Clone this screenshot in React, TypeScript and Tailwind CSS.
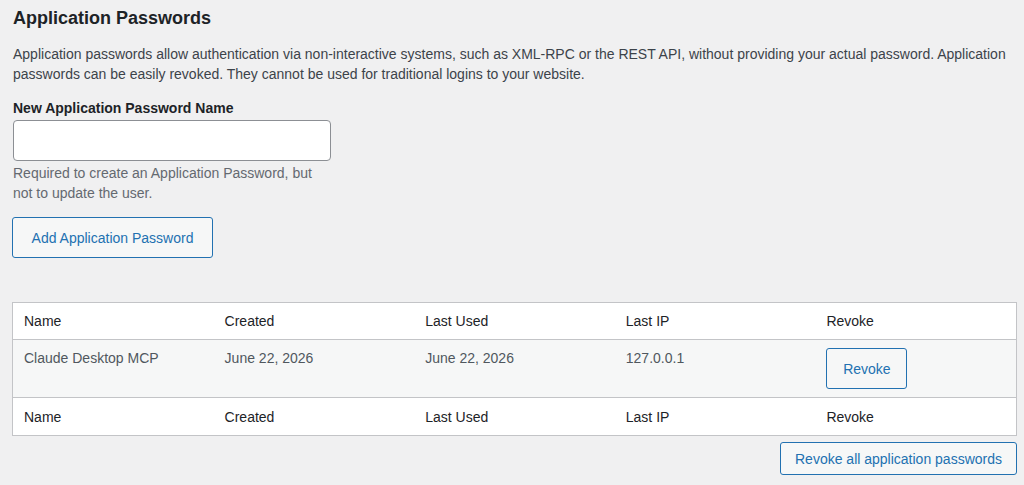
import React from "react";

const font = { fontFamily: '"Liberation Sans", Arial, sans-serif' };

export default function App() {
  const heads = ["Name", "Created", "Last Used", "Last IP", "Revoke"];
  return (
    <div style={font} className="w-[1024px] h-[485px] bg-[#f0f0f1] text-[#3c434a] text-[14px] leading-[20px] overflow-hidden">
      <div className="pl-[13px] pr-[7px]">
        <h2 className="pt-[7px] text-[18px] leading-[23px] font-bold text-[#1d2327]">Application Passwords</h2>
        <p className="mt-[14px]">
          Application passwords allow authentication via non-interactive systems, such as XML-RPC or the REST API, without providing your actual password. Application
          <br />
          passwords can be easily revoked. They cannot be used for traditional logins to your website.
        </p>
        <div className="mt-[14px] font-bold text-[#1d2327]">New Application Password Name</div>
        <div className="mt-[2px] w-[318px] h-[41px] bg-white border border-[#8c8f94] rounded-[4px]" />
        <p className="mt-[2px] text-[#646970]">
          Required to create an Application Password, but
          <br />
          not to update the user.
        </p>
        <button className="mt-[14px] -ml-px w-[201px] h-[41px] border border-[#2271b1] rounded-[3px] bg-[#f6f7f7] text-[#2271b1] text-[14px]">
          Add Application Password
        </button>
      </div>
      <div className="mt-[44px] ml-[12px] w-[1005px] border border-[#c3c4c7] bg-white text-[#1d2327]">
        <div className="grid grid-cols-5 h-[37px] items-center border-b border-[#c3c4c7]">
          {heads.map((h) => (
            <div key={h} className="pl-[11px]">{h}</div>
          ))}
        </div>
        <div className="grid grid-cols-5 h-[58px] bg-[#f6f7f7] text-[#50575e] border-b border-[#c3c4c7]">
          <div className="pl-[11px] pt-[8px]">Claude Desktop MCP</div>
          <div className="pl-[11px] pt-[8px]">June 22, 2026</div>
          <div className="pl-[11px] pt-[8px]">June 22, 2026</div>
          <div className="pl-[11px] pt-[8px]">127.0.0.1</div>
          <div className="pl-[11px] pt-[8px]">
            <button className="w-[81px] h-[41px] border border-[#2271b1] rounded-[3px] bg-[#f6f7f7] text-[#2271b1]">Revoke</button>
          </div>
        </div>
        <div className="grid grid-cols-5 h-[37px] items-center">
          {heads.map((h) => (
            <div key={h} className="pl-[11px]">{h}</div>
          ))}
        </div>
      </div>
      <div className="flex justify-end w-[1017px] mt-[6px]">
        <button className="w-[237px] h-[33px] border border-[#2271b1] rounded-[3px] bg-[#f6f7f7] text-[#2271b1]">
          Revoke all application passwords
        </button>
      </div>
    </div>
  );
}
